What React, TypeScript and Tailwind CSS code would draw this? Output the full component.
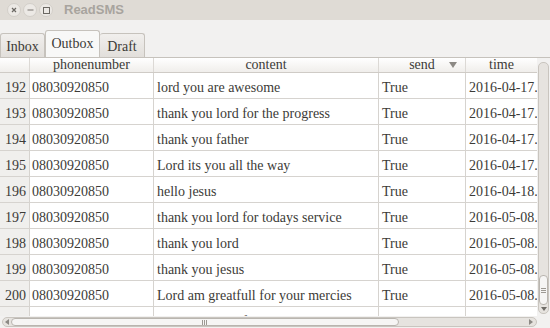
import React from 'react'

const rows = [
  { id: 192, content: 'lord you are awesome', time: '2016-04-17.' },
  { id: 193, content: 'thank you lord for the progress', time: '2016-04-17.' },
  { id: 194, content: 'thank you father', time: '2016-04-17.' },
  { id: 195, content: 'Lord its you all the way', time: '2016-04-17.' },
  { id: 196, content: 'hello jesus', time: '2016-04-18.' },
  { id: 197, content: 'thank you lord for todays service', time: '2016-05-08.' },
  { id: 198, content: 'thank you lord', time: '2016-05-08.' },
  { id: 199, content: 'thank you jesus', time: '2016-05-08.' },
  { id: 200, content: 'Lord am greatfull for your mercies', time: '2016-05-08.' },
  { id: 201, content: 'thank you lord for the day', time: '2016-05-08.' },
]

const serif = { fontFamily: '"Liberation Serif", "Times New Roman", serif' }

function WinButton({ children }: { children: React.ReactNode }) {
  return (
    <div className="w-[14px] h-[14px] rounded-full bg-[#ece9e5] border border-[#d3cfc9] flex items-center justify-center text-[#7b7873]">
      {children}
    </div>
  )
}

export default function App() {
  return (
    <div className="w-[550px] h-[328px] bg-[#f2f1f0] flex flex-col overflow-hidden text-[#3c3b37]" style={serif}>
      {/* Title bar */}
      <div className="h-[20px] bg-[#dfdbd5] flex items-center pl-[7px] gap-[2px] shrink-0">
        <WinButton>
          <svg width="6" height="6" viewBox="0 0 6 6">
            <path d="M1 1L5 5M5 1L1 5" stroke="#6b6863" strokeWidth="1.2" />
          </svg>
        </WinButton>
        <WinButton>
          <svg width="7" height="6" viewBox="0 0 7 6">
            <path d="M0.5 3H6.5" stroke="#8a8680" strokeWidth="1.2" />
          </svg>
        </WinButton>
        <WinButton>
          <svg width="7" height="7" viewBox="0 0 7 7">
            <rect x="0.5" y="0.5" width="6" height="6" fill="none" stroke="#6b6863" strokeWidth="1" />
          </svg>
        </WinButton>
        <span
          className="ml-[9px] text-[13px] font-bold text-[#a8a49e]"
          style={{ fontFamily: '"Liberation Sans", Arial, sans-serif' }}
        >
          ReadSMS
        </span>
      </div>

      {/* Tabs */}
      <div className="h-[37px] flex items-end pl-0 shrink-0">
        <div className="h-[24px] w-[45px] border border-b-0 border-[#c6c2bc] rounded-t-[3px] bg-gradient-to-b from-[#f1efed] to-[#e2dfdb] flex items-center justify-center text-[14px] pt-[2px]">
          Inbox
        </div>
        <div className="h-[27px] w-[55px] border border-b-0 border-[#c6c2bc] rounded-t-[3px] bg-[#f8f8f7] flex items-center justify-center text-[14px] pb-[2px]">
          Outbox
        </div>
        <div className="h-[24px] w-[45px] border border-b-0 border-l-0 border-[#c6c2bc] rounded-t-[3px] bg-gradient-to-b from-[#f1efed] to-[#e2dfdb] flex items-center justify-center text-[14px] pt-[2px]">
          Draft
        </div>
      </div>

      {/* Table */}
      <div className="flex-1 flex flex-col bg-white border-t border-[#c6c2bc] min-h-0">
        <div className="flex flex-1 min-h-0">
          <div className="flex-1 flex flex-col min-w-0 overflow-hidden">
            {/* Header */}
            <div className="h-[15px] flex shrink-0 border-b border-[#cfcbc6] bg-gradient-to-b from-[#ffffff] to-[#f0eeeb] text-[14px] leading-[14px]">
              <div className="w-[30px] border-r border-[#dcd9d5]" />
              <div className="w-[124px] border-r border-[#dcd9d5] text-center">phonenumber</div>
              <div className="w-[225px] border-r border-[#dcd9d5] text-center">content</div>
              <div className="w-[87px] border-r border-[#dcd9d5] relative text-center">
                send
                <svg className="absolute right-[8px] top-[4px]" width="8" height="6" viewBox="0 0 8 6">
                  <path d="M0 0H8L4 6Z" fill="#8c8984" />
                </svg>
              </div>
              <div className="flex-1 text-center">time</div>
            </div>

            {/* Rows */}
            <div className="flex-1 overflow-hidden">
              {rows.map((r) => (
                <div key={r.id} className="h-[26px] flex text-[14px]">
                  <div className="w-[30px] bg-[#f0efed] border-r border-b border-[#d6d3cf] flex items-center justify-end pr-[3px] pt-[3px]">
                    {r.id}
                  </div>
                  <div className="w-[124px] border-r border-b border-[#d6d3cf] flex items-center pl-[2px] pt-[3px]">
                    08030920850
                  </div>
                  <div className="w-[225px] border-r border-b border-[#d6d3cf] flex items-center pl-[3px] pt-[3px] whitespace-nowrap">
                    {r.content}
                  </div>
                  <div className="w-[87px] border-r border-b border-[#d6d3cf] flex items-center pl-[3px] pt-[3px]">
                    True
                  </div>
                  <div className="flex-1 border-b border-[#d6d3cf] flex items-center pl-[3px] pt-[3px] whitespace-nowrap overflow-hidden">
                    {r.time}
                  </div>
                </div>
              ))}
            </div>
          </div>

          {/* Vertical scrollbar */}
          <div className="w-[13px] bg-[#f2f1f0] flex flex-col items-center pt-[4px] pb-[2px] shrink-0">
            <div className="w-[11px] flex-1 rounded-[5px] border border-[#c9c5bf] bg-[#e6e3df] flex flex-col justify-end items-center">
              <div className="w-[9px] h-[30px] rounded-[4px] border border-[#b9b5af] bg-[#f6f5f4] flex items-center justify-center">
                <svg width="5" height="5" viewBox="0 0 5 5">
                  <path d="M0 0.5H5M0 2.5H5M0 4.5H5" stroke="#9d9993" strokeWidth="1" />
                </svg>
              </div>
              <svg className="my-[2px]" width="6" height="4" viewBox="0 0 6 4">
                <path d="M0 0H6L3 4Z" fill="#6f6c67" />
              </svg>
            </div>
          </div>
        </div>

        {/* Horizontal scrollbar */}
        <div className="h-[12px] bg-[#f2f1f0] flex items-center pl-[2px] pr-[13px] shrink-0">
          <div className="flex-1 h-[10px] rounded-[5px] border border-[#c9c5bf] bg-[#e6e3df] flex items-center">
            <svg className="mx-[2px]" width="4" height="6" viewBox="0 0 4 6">
              <path d="M4 0V6L0 3Z" fill="#8c8984" />
            </svg>
            <div className="w-[388px] h-[8px] rounded-[4px] border border-[#b9b5af] bg-[#f6f5f4] flex items-center justify-center">
              <svg width="6" height="5" viewBox="0 0 6 5">
                <path d="M0.5 0V5M2.5 0V5M4.5 0V5" stroke="#9d9993" strokeWidth="1" />
              </svg>
            </div>
            <div className="flex-1" />
            <svg className="mx-[3px]" width="4" height="6" viewBox="0 0 4 6">
              <path d="M0 0V6L4 3Z" fill="#8c8984" />
            </svg>
          </div>
        </div>
      </div>
    </div>
  )
}
